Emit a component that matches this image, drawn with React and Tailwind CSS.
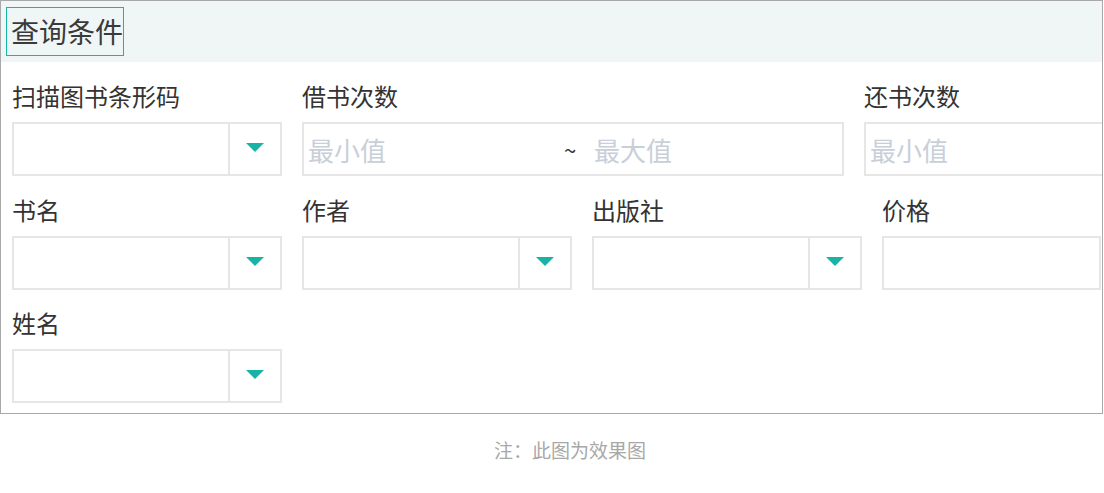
import React from 'react';

const font = { fontFamily: '"Noto Sans CJK SC", "Noto Sans", sans-serif' };

function Label({ children, className = '' }) {
  return (
    <div className={`text-[24px] leading-[28px] text-[#333] mb-[12px] whitespace-nowrap ${className}`}>{children}</div>
  );
}

function Select({ w = 'w-[270px]' }) {
  return (
    <div className={`${w} h-[54px] border-2 border-[#e6e6e6] bg-white flex shrink-0`}>
      <div className="flex-1" />
      <div className="w-[52px] border-l-2 border-[#e6e6e6] flex items-center justify-center pb-[3px]">
        <svg width="18" height="9" viewBox="0 0 18 9">
          <path d="M0 0 H18 L9 9 Z" fill="#18b3a4" />
        </svg>
      </div>
    </div>
  );
}

function TextBox({ w = 'w-[270px]', placeholder }) {
  return (
    <div className={`${w} h-[54px] border-2 border-[#e6e6e6] bg-white flex items-center px-[4px] shrink-0`}>
      {placeholder && <span className="text-[26px] text-[#c9cfd9] whitespace-nowrap">{placeholder}</span>}
    </div>
  );
}

function Field({ label, children, className = '' }) {
  return (
    <div className={`flex flex-col shrink-0 ${className}`}>
      <Label>{label}</Label>
      {children}
    </div>
  );
}

export default function App() {
  return (
    <div className="w-[1104px] h-[493px] bg-white" style={font}>
      <div className="w-[1103px] h-[414px] border border-[#a9a9a9] overflow-hidden">
        {/* Header */}
        <div className="h-[61px] bg-[#f0f6f6] pt-[6px] pl-[5px]">
          <div className="inline-block border border-[#14b8a6] pl-[4px] pr-[0px] text-[28px] leading-[47px] text-[#3a3a3a]">
            查询条件
          </div>
        </div>

        <div className="pl-[11px]">
          {/* Row 1 */}
          <div className="flex pt-[20px] gap-[20px]">
            <Field label="扫描图书条形码">
              <Select />
            </Field>
            <Field label="借书次数">
              <div className="w-[542px] h-[54px] border-2 border-[#e6e6e6] bg-white flex items-center px-[4px]">
                <span className="w-[256px] text-[26px] text-[#c9cfd9] whitespace-nowrap">最小值</span>
                <span className="text-[22px] text-[#333] w-[30px]">~</span>
                <span className="text-[26px] text-[#c9cfd9] whitespace-nowrap">最大值</span>
              </div>
            </Field>
            <Field label="还书次数">
              <TextBox placeholder="最小值" />
            </Field>
          </div>

          {/* Row 2 */}
          <div className="flex pt-[20px] gap-[20px]">
            <Field label="书名">
              <Select />
            </Field>
            <Field label="作者">
              <Select />
            </Field>
            <Field label="出版社">
              <Select />
            </Field>
            <Field label="价格">
              <TextBox w="w-[219px]" />
            </Field>
          </div>

          {/* Row 3 */}
          <div className="flex pt-[19px]">
            <Field label="姓名">
              <Select />
            </Field>
          </div>
        </div>
      </div>

      <div className="flex justify-center pl-[36px] pt-[24px] text-[19px] leading-[24px] text-[#a8a8a8]">
        注：此图为效果图
      </div>
    </div>
  );
}
